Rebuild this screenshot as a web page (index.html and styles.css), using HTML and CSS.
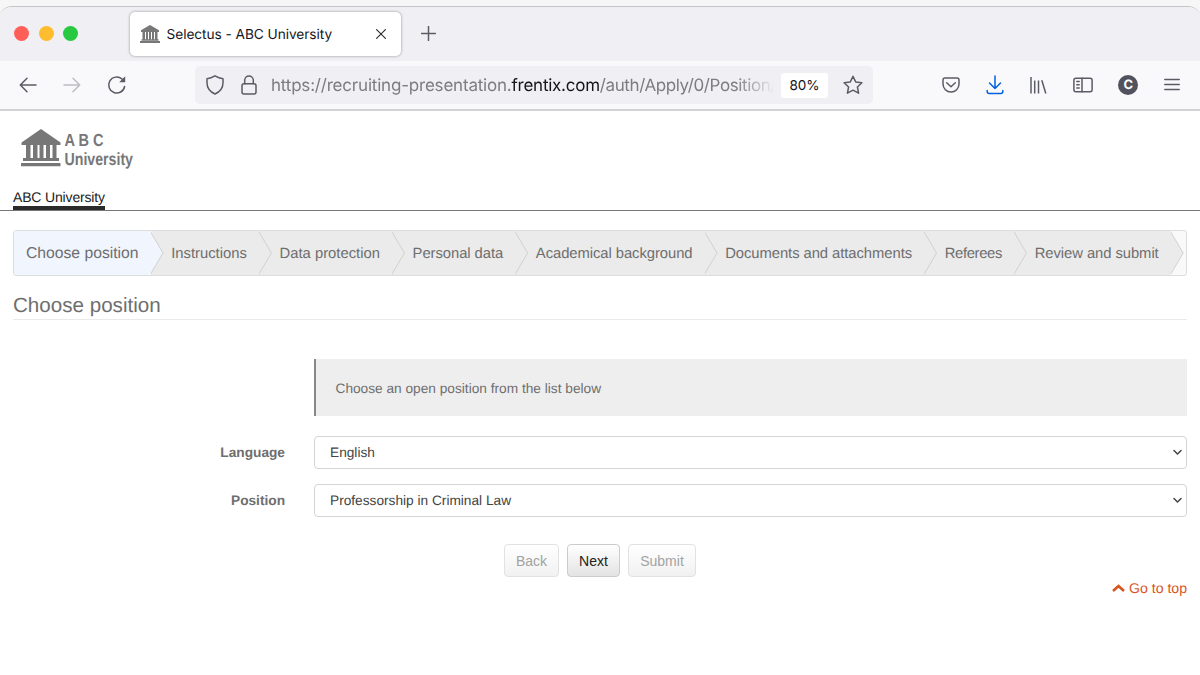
FILE: index.html
```html
<!DOCTYPE html>
<html lang="en">
<head>
  <meta charset="UTF-8" />
  <meta name="viewport" content="width=device-width, initial-scale=1.0"/>
  <title>Selectus - ABC University</title>
  <link rel="stylesheet" href="styles.css">
</head>
<body>
  <div class="window">
    <div class="tab-bar">
      <div class="lights">
        <span class="light red"></span>
        <span class="light yellow"></span>
        <span class="light green"></span>
      </div>
      <div class="tab">
        <svg class="favicon" width="20" height="18" viewBox="0 0 40 38" preserveAspectRatio="none">
          <path d="M20 0 38 11v4H2v-4z M5 15h5v17H5z M12 15h4v17h-4z M18 15h4v17h-4z M24 15h4v17h-4z M30 15h5v17h-5z M3 30h34v3H3z M0 34h40v4H0z"/>
        </svg>
        <span class="tab-title">Selectus - ABC University</span>
        <svg class="tab-close" width="10" height="10" viewBox="0 0 10 10"><path d="M.6.6l8.800 8.800M9.400.6.6 9.400"/></svg>
      </div>
      <svg class="new-tab" width="15" height="15" viewBox="0 0 15 15"><path d="M7.500.5v14M.5 7.500h14"/></svg>
    </div>

    <div class="toolbar">
      <div class="nav">
        <svg width="18" height="16" viewBox="0 0 18 16"><path d="M17 8H1.500M8 1.300 1.300 8 8 14.700"/></svg>
        <svg class="disabled" width="18" height="16" viewBox="0 0 18 16"><path d="M1 8h15.500M10 1.300 16.700 8 10 14.700"/></svg>
        <svg width="20" height="20" viewBox="0 0 20 20"><path d="M17.600 11.500A8 8 0 1 1 15 4l2 2"/><path class="solid" d="M18.200 1.200v6h-6z"/></svg>
      </div>
      <div class="url-bar">
        <svg width="20" height="22" viewBox="0 0 20 22"><path d="M10 1.800c2.500 1.500 5 2.500 8 3v4c0 5-3 9-8 11.200C5 17.800 2 13.800 2 8.800v-4c3-.5 5.500-1.500 8-3z"/></svg>
        <svg class="lock" width="16" height="20" viewBox="0 0 16 20"><rect x="1" y="8.700" width="14" height="10.300" rx="2"/><path d="M3.700 8.700V5.300a4.300 4.300 0 0 1 8.600 0v3.400"/></svg>
        <div class="url"><span class="subdomain">https://recruiting-presentation.</span><span class="host">frentix.com</span>/auth/Apply/0/Position/</div>
        <div class="zoom">80%</div>
        <svg class="star" width="20" height="20" viewBox="0 0 20 20"><path d="M10 1.300l2.700 5.600 6.200.8-4.500 4.300 1.200 6.200-5.600-3-5.600 3 1.200-6.200L1.100 7.700l6.200-.8z"/></svg>
      </div>
      <div class="tools">
        <svg width="18" height="18" viewBox="0 0 18 18"><path d="M3 2h12a2 2 0 0 1 2 2v4A8 8 0 0 1 1 8V4a2 2 0 0 1 2-2zM4.700 6.700l4.300 4 4.300-4"/></svg>
        <svg class="download" width="18" height="20" viewBox="0 0 18 20"><path d="M9 1v12.500M3.500 8 9 13.500 14.500 8M1.200 15.500v1a2 2 0 0 0 2 2h11.600a2 2 0 0 0 2-2v-1"/></svg>
        <svg class="library" width="18" height="18" viewBox="0 0 18 18"><path d="M2 1v16.500M5.700 4.500v13M9.500 4.500v13M12.800 4.200l4 13.300"/></svg>
        <svg width="20" height="16" viewBox="0 0 20 16"><rect x=".9" y="1.200" width="18.200" height="13.600" rx="2"/><path d="M9 1.200v13.600M3.800 4.500h2.400M3.800 7.700h2.400M3.800 10.900h2.400"/></svg>
        <span class="account">C</span>
        <svg width="16" height="14" viewBox="0 0 16 14"><path d="M.8 1.500h14.400M.8 6.500h14.400M.8 11.500h14.400"/></svg>
      </div>
    </div>

    <div class="page">
      <header class="header">
        <svg class="logo" width="120" height="44" viewBox="0 0 120 44">
          <path d="M20 0 39.500 13.500v2.500H.5v-2.500z M5 16h4.500v13H5z M12 16h4.500v13H12z M18.500 16h4v13h-4z M25 16h4v13h-4z M31.500 16H35.500v13h-4z M2 29h36v3H2z M0 34h39.500v3.300H0z"/>
          <text x="43.500" y="16.500" textLength="39" lengthAdjust="spacingAndGlyphs">A B C</text>
          <text x="43.500" y="35.500" textLength="68.500" lengthAdjust="spacingAndGlyphs">University</text>
        </svg>
        <a class="site-link">ABC University</a>
      </header>

      <main class="content">
        <ol class="steps">
          <li class="step active">Choose position</li>
          <li class="step">Instructions</li>
          <li class="step">Data protection</li>
          <li class="step">Personal data</li>
          <li class="step">Academical background</li>
          <li class="step">Documents and attachments</li>
          <li class="step">Referees</li>
          <li class="step">Review and submit</li>
        </ol>

        <h1>Choose position</h1>

        <form class="form">
          <div class="info">Choose an open position from the list below</div>
          <label>Language</label>
          <div class="select">English
            <svg width="9" height="7" viewBox="0 0 9 7"><path d="M1 1.500l3.500 3.500L8 1.500"/></svg>
          </div>
          <label>Position</label>
          <div class="select">Professorship in Criminal Law
            <svg width="9" height="7" viewBox="0 0 9 7"><path d="M1 1.500l3.500 3.500L8 1.500"/></svg>
          </div>
        </form>

        <div class="buttons">
          <button type="button" class="back" disabled>Back</button>
          <button type="button" class="next">Next</button>
          <button type="button" class="submit" disabled>Submit</button>
        </div>

        <a class="to-top">
          <svg width="13" height="8" viewBox="0 0 13 8"><path d="M1 7l5.500-5L12 7"/></svg>
          <span>Go to top</span>
        </a>
      </main>
    </div>
  </div>
</body>
</html>
```
FILE: styles.css
```css
* {
  box-sizing: border-box;
}

body {
  margin: 0;
  padding-top: 6px;
  height: 675px;
  overflow: hidden;
  background: #f6f6f6;
  font-family: "Liberation Sans", Arial, sans-serif;
  color: #6e6e6e;
  text-rendering: geometricPrecision;
}

.window {
  height: 669px;
  margin-left: -1px;
  margin-right: -1px;
  padding: 0 1px;
  border-top: 1px solid #c4c4c6;
  border-radius: 13px 13px 0 0;
  background: white;
  overflow: hidden;
}

svg {
  display: block;
  flex: none;
  fill: none;
  stroke: #5b5b66;
  stroke-width: 1.5;
  stroke-linecap: round;
  stroke-linejoin: round;
}

/* browser tabs */
.tab-bar {
  display: flex;
  align-items: center;
  height: 54px;
  margin: 0 -1px;
  padding: 0 0 1px 15px;
  background: #f0f0f4;
  font-family: Inter, sans-serif;
}

.lights {
  display: flex;
  gap: 9.5px;
  width: 116px;
}

.light {
  width: 15px;
  height: 15px;
  border-radius: 50%;
}

.red { background: #ff5f57; }
.yellow { background: #febc2e; }
.green { background: #28c840; }

.tab {
  display: flex;
  align-items: center;
  width: 271px;
  height: 44px;
  padding: 0 15px 0 10px;
  border-radius: 5px;
  background: white;
  box-shadow: 0 0 3px rgba(0,0,0,0.4);
}

.favicon {
  fill: #777;
  stroke: none;
}

.tab-title {
  margin-left: 6.5px;
  padding-top: 3px;
  flex: 1;
  font-size: 13.7px;
  letter-spacing: -0.06px;
  color: #15141a;
  white-space: nowrap;
}

.tab-close {
  stroke: #333;
  stroke-width: 1.2;
}

.new-tab {
  margin-left: 20px;
}

/* address bar */
.toolbar {
  display: flex;
  align-items: center;
  height: 50px;
  border-bottom: 2px solid #d2d2d5;
  background: #f9f9fb;
  font-family: Inter, sans-serif;
}

.nav {
  display: flex;
  align-items: center;
  gap: 26px;
  width: 195px;
  padding-left: 19px;
}

.disabled {
  stroke: #bdbdc2;
}

.nav .solid {
  fill: #5b5b66;
  stroke: none;
}

.url-bar {
  display: flex;
  align-items: center;
  width: 678px;
  height: 38px;
  padding: 0 10px;
  border-radius: 5px;
  background: #f0f0f4;
}

.lock {
  margin-left: 16px;
}

.url {
  width: 502px;
  margin-left: 14px;
  padding-top: 2px;
  font-size: 17px;
  letter-spacing: -0.4px;
  color: #7c7c83;
  white-space: nowrap;
  overflow: hidden;
  -webkit-mask-image: linear-gradient(90deg, #000 465px, transparent 504px);
  mask-image: linear-gradient(90deg, #000 465px, transparent 504px);
}

.subdomain {
  letter-spacing: -0.2px;
}

.host {
  color: #15141a;
  letter-spacing: -0.25px;
}

.zoom {
  width: 47px;
  height: 25px;
  margin-left: 8px;
  border-radius: 3px;
  background: white;
  color: #15141a;
  font-size: 13.5px;
  line-height: 27px;
  text-align: center;
}

.star {
  margin-left: 15px;
}

.tools {
  display: flex;
  flex: 1;
  align-items: center;
  justify-content: space-between;
  padding: 0 20px 0 69px;
}

.download {
  stroke: #0060df;
}

.library {
  stroke-linecap: butt;
}

.account {
  width: 20px;
  height: 20px;
  border-radius: 50%;
  background: #52525e;
  color: white;
  font-size: 13px;
  font-weight: 700;
  line-height: 20px;
  text-align: center;
}

/* site header */
.header {
  display: flex;
  flex-direction: column;
  align-items: flex-start;
  height: 100px;
  padding: 18px 13px 0;
  border-bottom: 1px solid #777;
}

.logo {
  margin-left: 8px;
  fill: #777;
  stroke: none;
  font-size: 17.5px;
  font-weight: 700;
}

.site-link {
  height: 21px;
  margin-top: 16px;
  border-bottom: 4px solid #2b2b2b;
  color: #222;
  font-size: 14px;
  letter-spacing: -0.16px;
  line-height: 17px;
}

.content {
  padding: 19px 13px 0;
}

/* wizard steps */
.steps {
  display: flex;
  height: 46px;
  margin: 0;
  padding: 0;
  list-style: none;
  border: 1px solid #ddd;
  border-radius: 3px;
  background: #f9f9f9;
  overflow: hidden;
}

.step {
  position: relative;
  padding: 0 12px 0 20.7px;
  background: #ebebeb;
  font-size: 14.8px;
  line-height: 46px;
  white-space: nowrap;
}

.step:nth-child(n+4) {
  letter-spacing: -0.06px;
}

.step:nth-child(7) {
  letter-spacing: -0.35px;
}

.step::before,
.step::after {
  content: "";
  position: absolute;
  z-index: 1;
  top: 0;
  left: 100%;
  width: 13px;
  height: 44px;
  background: #d0d0d0;
  clip-path: polygon(0 0, 100% 50%, 0 100%);
}

.step::after {
  left: calc(100% - 1px);
  background: #ebebeb;
}

.step.active {
  padding-left: 12px;
  background: #f0f5fe;
  font-size: 15.7px;
}

.step.active::after {
  background: #f0f5fe;
}

h1 {
  height: 31px;
  margin: 13px 0 39px;
  border-bottom: 1px solid #eaeaea;
  font-size: 20.6px;
  font-weight: 400;
  line-height: 34px;
}

/* position form */
.form {
  display: grid;
  grid-template-columns: 272px 873px;
  column-gap: 29px;
  font-size: 13.7px;
}

.info {
  grid-column: 2;
  height: 57px;
  margin-bottom: 20px;
  padding-left: 19.5px;
  border-left: 2px solid #888;
  background: #eee;
  line-height: 59px;
}

.form label {
  font-weight: 700;
  line-height: 34px;
  text-align: right;
}

.select {
  display: flex;
  align-items: center;
  justify-content: space-between;
  height: 33px;
  margin-bottom: 14.5px;
  padding: 0 4px 0 15px;
  border: 1px solid #d5d5d5;
  border-radius: 4px;
  color: #444;
}

.select svg {
  stroke: #444;
}

.buttons {
  display: flex;
  justify-content: center;
  gap: 8px;
  margin-top: 13.4px;
}

button {
  height: 33px;
  padding: 0;
  border: 1px solid #ccc;
  border-radius: 4px;
  background: linear-gradient(#fff, #e3e3e3);
  color: #222;
  font-family: inherit;
  font-size: 14px;
}

button:disabled {
  border-color: #e2e2e2;
  background: linear-gradient(#fff, #f1f1f1);
  color: #a3a3a3;
}

.back { width: 55px; }
.next { width: 53px; }
.submit { width: 68px; }

.to-top {
  display: flex;
  align-items: center;
  justify-content: flex-end;
  gap: 4px;
  margin-top: 2.6px;
  color: #d9541e;
  font-size: 14.1px;
  line-height: 17px;
}

.to-top svg {
  stroke: #d9541e;
  stroke-width: 2.6;
  stroke-linecap: butt;
  stroke-linejoin: miter;
}
```
